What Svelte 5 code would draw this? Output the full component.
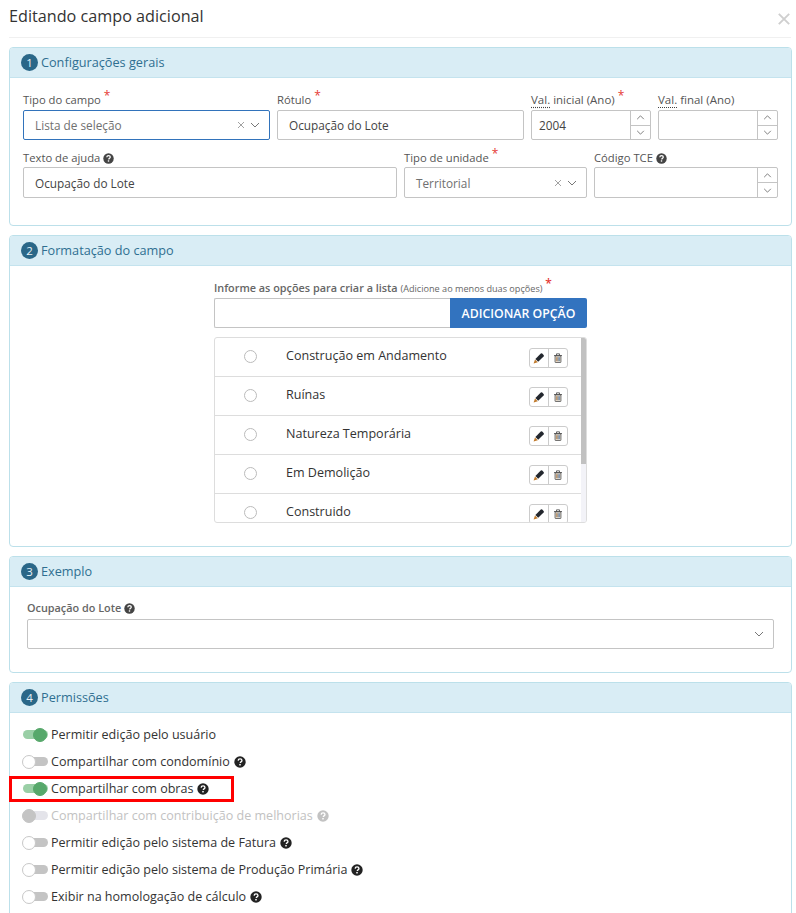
<script>
  const options = ['Construção em Andamento', 'Ruínas', 'Natureza Temporária', 'Em Demolição', 'Construido'];
  const perms = [
    { label: 'Permitir edição pelo usuário', state: 'on', help: false },
    { label: 'Compartilhar com condomínio', state: 'off', help: true },
    { label: 'Compartilhar com obras', state: 'on', help: true, marked: true },
    { label: 'Compartilhar com contribuição de melhorias', state: 'disabled', help: true },
    { label: 'Permitir edição pelo sistema de Fatura', state: 'off', help: true },
    { label: 'Permitir edição pelo sistema de Produção Primária', state: 'off', help: true },
    { label: 'Exibir na homologação de cálculo', state: 'off', help: true }
  ];
</script>

{#snippet help()}
  <svg class="help" viewBox="0 0 16 16" aria-hidden="true"><circle cx="8" cy="8" r="7.6" fill="currentColor"/><path d="M5.5 6.2c.1-1.5 1.1-2.3 2.6-2.3s2.5.8 2.5 2c0 1-.6 1.5-1.3 1.9-.6.4-.8.6-.8 1.2v.3" fill="none" stroke="#fff" stroke-width="1.8"/><rect x="7" y="10.6" width="2" height="2" fill="#fff"/></svg>
{/snippet}
{#snippet chev()}
  <svg class="chev" viewBox="0 0 10 6" aria-hidden="true"><path d="M1 1l4 4 4-4" fill="none" stroke="currentColor" stroke-width="1"/></svg>
{/snippet}
{#snippet clear()}
  <svg class="clear" viewBox="0 0 8 8" aria-hidden="true"><path d="M1 1l6 6M7 1l-6 6" fill="none" stroke="currentColor" stroke-width="0.8"/></svg>
{/snippet}
{#snippet spinner()}
  <div class="spin">
    <span><svg viewBox="0 0 10 6"><path d="M1 5l4-4 4 4" fill="none" stroke="currentColor" stroke-width="1"/></svg></span>
    <span><svg viewBox="0 0 10 6"><path d="M1 1l4 4 4-4" fill="none" stroke="currentColor" stroke-width="1"/></svg></span>
  </div>
{/snippet}
{#snippet head(n, title)}
  <div class="phead"><span class="num">{n}</span><span class="ptitle">{title}</span></div>
{/snippet}

<div class="page">
  <header class="mhead">
    <h1>Editando campo adicional</h1>
    <svg class="close" viewBox="0 0 12 12" aria-hidden="true"><path d="M.8.8l10.4 10.4M11.2.8L.8 11.2" fill="none" stroke="currentColor" stroke-width="1.9"/></svg>
  </header>

  <section class="panel p1">
    {@render head(1, 'Configurações gerais')}
    <div class="body">
      <div class="row r1">
        <div class="field w246"><label>Tipo do campo <i>*</i></label>
          <div class="input focus muted"><span class="grow">Lista de seleção</span>{@render clear()}{@render chev()}</div></div>
        <div class="field w246"><label>Rótulo <i>*</i></label>
          <div class="input"><span class="grow">Ocupação do Lote</span></div></div>
        <div class="field w120"><label class="val"><u>Val.</u> inicial (Ano) <i>*</i></label>
          <div class="input num-in"><span class="grow">2004</span>{@render spinner()}</div></div>
        <div class="field w120"><label class="val"><u>Val.</u> final (Ano)</label>
          <div class="input num-in"><span class="grow"></span>{@render spinner()}</div></div>
      </div>
      <div class="row r2">
        <div class="field w374"><label>Texto de ajuda {@render help()}</label>
          <div class="input tall"><span class="grow">Ocupação do Lote</span></div></div>
        <div class="field w183"><label>Tipo de unidade <i>*</i></label>
          <div class="input tall muted"><span class="grow">Territorial</span>{@render clear()}{@render chev()}</div></div>
        <div class="field w184"><label>Código TCE {@render help()}</label>
          <div class="input tall num-in"><span class="grow"></span>{@render spinner()}</div></div>
      </div>
    </div>
  </section>

  <section class="panel p2">
    {@render head(2, 'Formatação do campo')}
    <div class="opts">
      <label class="strong">Informe as opções para criar a lista <small>(Adicione ao menos duas opções)</small> <i>*</i></label>
      <div class="addrow"><div class="addin"></div><div class="btn">ADICIONAR OPÇÃO</div></div>
      <div class="list">
        {#each options as o}
          <div class="item">
            <span class="radio"></span>
            <span class="otext">{o}</span>
            <div class="acts">
              <span class="act"><svg viewBox="0 0 12 12" aria-hidden="true"><path d="M2.4 7L7.8 1.6a1 1 0 0 1 1.4 0l1.4 1.4a1 1 0 0 1 0 1.4L5.2 9.8z" fill="#23272e"/><path d="M.6 11.6l1.4-4.2L4.8 10.2z" fill="#c07a2c"/></svg></span>
              <span class="act"><svg class="trash" viewBox="0 0 12 12" aria-hidden="true"><path d="M2.5 3.5h7v7.2a.8.8 0 0 1-.8.8H3.3a.8.8 0 0 1-.8-.8z" fill="#f6efe2" stroke="#4a4a4a" stroke-width="1"/><path d="M1.2 3h9.6M4.2 3V1h3.6V3" fill="none" stroke="#4a4a4a" stroke-width="1"/><path d="M4.5 5v5" stroke="#a5672a" stroke-width="1"/><path d="M6 5v5" stroke="#555" stroke-width="1"/><path d="M7.5 5v5" stroke="#35619c" stroke-width="1"/></svg></span>
            </div>
          </div>
        {/each}
        <div class="track"><div class="thumb"></div></div>
      </div>
    </div>
  </section>

  <section class="panel p3">
    {@render head(3, 'Exemplo')}
    <div class="ex">
      <label class="strong">Ocupação do Lote {@render help()}</label>
      <div class="input muted"><span class="grow"></span>{@render chev()}</div>
    </div>
  </section>

  <section class="panel p4">
    {@render head(4, 'Permissões')}
    <div class="perms">
      {#each perms as p}
        <div class="perm {p.state}" class:marked={p.marked}>
          <span class="tog"><span class="knob"></span></span>
          <span>{p.label}</span>
          {#if p.help}{@render help()}{/if}
        </div>
      {/each}
    </div>
  </section>
</div>

<style>
  :global(html), :global(body) { margin: 0; height: 913px; overflow: hidden; background: #fff; }
  .page { width: 796px; height: 913px; overflow: hidden; box-sizing: border-box; padding: 0 5px 0 9px; font-family: "Open Sans", sans-serif; font-size: 12px; color: #555; }
  .mhead { height: 38px; box-sizing: border-box; border-bottom: 1px solid #f0f0f0; display: flex; justify-content: space-between; align-items: center; padding-bottom: 6px; margin-bottom: 9px; }
  h1 { margin: 0; font-size: 16.2px; font-weight: 400; color: #333; line-height: 24px; }
  .close { width: 12px; height: 12px; color: #cfcfcf; margin-right: 1px; margin-top: 6px; }
  .panel { box-sizing: border-box; border: 1px solid #bce0ea; border-radius: 4px; margin-bottom: 9px; width: 783px; }
  .p1 { height: 179px; }
  .p2 { height: 312px; }
  .p3 { height: 117px; }
  .p4 { height: 300px; }
  .phead { height: 30px; box-sizing: border-box; background: #d9edf5; border-bottom: 1px solid #c4e3ee; display: flex; align-items: center; gap: 3px; padding-left: 11px; color: #2f6f91; font-size: 12.7px; border-radius: 3px 3px 0 0; }
  .ptitle { margin-top: -2px; }
  .num { width: 17px; height: 17px; border-radius: 50%; background: #2a6788; color: #e8f2f7; font-size: 11.5px; display: flex; align-items: center; justify-content: center; }
  .body { padding: 0 13px; }
  .row { display: flex; gap: 7px; }
  .r1 { margin-top: 10px; }
  .r2 { margin-top: 8px; }
  .field { display: flex; flex-direction: column; }
  .w246 { width: 247px; }
  .w120 { width: 120px; }
  .w374 { width: 374px; }
  .w183 { width: 183px; }
  .w184 { width: 184px; }
  label { display: block; height: 22px; line-height: 23px; color: #555; font-size: 11.25px; white-space: nowrap; }
  label.val { font-size: 11.5px; }
  .r2 label { height: 19px; line-height: 20px; }
  label i { color: #e53935; font-style: normal; font-size: 12px; position: relative; top: -4px; }
  label u { text-decoration: underline dotted #444; text-underline-offset: 3px; }
  .strong { font-weight: 600; font-size: 10.85px; color: #666; }
  small { font-weight: 400; font-size: 9.15px; color: #666; }
  .input { height: 30px; box-sizing: border-box; border: 1px solid #c4c4c4; border-radius: 2px; display: flex; align-items: center; padding-left: 11px; font-size: 11.8px; color: #444; background: #fff; }
  .tall { height: 31px; }
  .muted { color: #707070; }
  .focus { border-color: #3273bb; }
  .grow { flex: 1; }
  .num-in { padding-left: 7px; }
  .clear { width: 8px; height: 8px; color: #8a8a8a; margin-right: 5px; }
  .chev { width: 10px; height: 6px; color: #777; margin-right: 9px; }
  .spin { width: 19px; height: 100%; border-left: 1px solid #c4c4c4; display: flex; flex-direction: column; }
  .spin span { flex: 1; display: flex; align-items: center; justify-content: center; color: #666; }
  .spin span + span { border-top: 1px solid #c4c4c4; }
  .spin svg { width: 9px; height: 5px; }
  .opts { width: 373px; margin: 0 auto; padding-top: 8px; }
  .opts > label { height: 24px; line-height: 28px; }
  .addrow { display: flex; height: 30px; }
  .addin { flex: 1; border: 1px solid #c4c4c4; border-right: 0; border-radius: 2px 0 0 2px; }
  .btn { width: 137px; background: #3273bf; color: #fff; font-size: 12.3px; font-weight: 600; display: flex; align-items: center; justify-content: center; border-radius: 0 2px 2px 0; }
  .list { margin-top: 9px; height: 186px; box-sizing: border-box; border: 1px solid #ddd; border-radius: 3px; position: relative; overflow: hidden; }
  .item { height: 39px; box-sizing: border-box; border-bottom: 1px solid #ddd; display: flex; align-items: center; padding-left: 29px; padding-right: 18px; font-size: 12.55px; color: #333; }
  .item:last-of-type { border-bottom: 0; }
  .radio { width: 13px; height: 13px; border: 1px solid #bbb; border-radius: 50%; margin-right: 29px; box-sizing: border-box; margin-top: -2px; }
  .otext { flex: 1; margin-top: -3px; }
  .acts { display: flex; margin-top: 1px; border: 1px solid #ccc; border-radius: 3px; }
  .act { width: 18px; height: 18px; display: flex; align-items: center; justify-content: center; }
  .act + .act { border-left: 1px solid #ccc; }
  .act svg { width: 12px; height: 12px; }
  .act svg.trash { width: 10px; height: 10px; }
  .track { position: absolute; right: 0; top: 0; bottom: 0; width: 5px; background: #f3f3f8; }
  .thumb { height: 126px; background: #c1c1c1; }
  .ex { padding: 10px 17px 0 17px; }
  .ex > label { height: 22px; line-height: 22px; }
  .ex .input { height: 30px; justify-content: flex-end; }
  .perms { padding: 8px 13px 0; }
  .perm { height: 27px; display: flex; align-items: center; gap: 3px; color: #333; font-size: 12.55px; white-space: nowrap; position: relative; }
  .perm .help { margin-left: 1px; color: #222; width: 12px; height: 12px; }
  .tog { width: 25px; height: 9px; border-radius: 5px; position: relative; background: #c4c4c4; display: block; }
  .knob { position: absolute; top: -2.5px; left: -1px; width: 14px; height: 14px; box-sizing: border-box; border-radius: 50%; background: #fff; border: 1px solid #c8c8c8; }
  .on .tog { background: #9acfa6; }
  .on .knob { left: 10px; background: #57a86b; border-color: #57a86b; }
  .disabled { color: #c2c2c2; }
  .disabled .tog { background: #e4e4ea; }
  .disabled .knob { background: #c4c4c4; border-color: #c4c4c4; }
  .perm.disabled .help { color: #c2c2c2; }
  .marked::after { content: ""; position: absolute; left: -14px; top: 1px; width: 225px; height: 26px; box-sizing: border-box; border: 3px solid #f00; }
  .help { width: 11px; height: 11px; display: inline-block; vertical-align: -1.5px; color: #444; }
</style>
